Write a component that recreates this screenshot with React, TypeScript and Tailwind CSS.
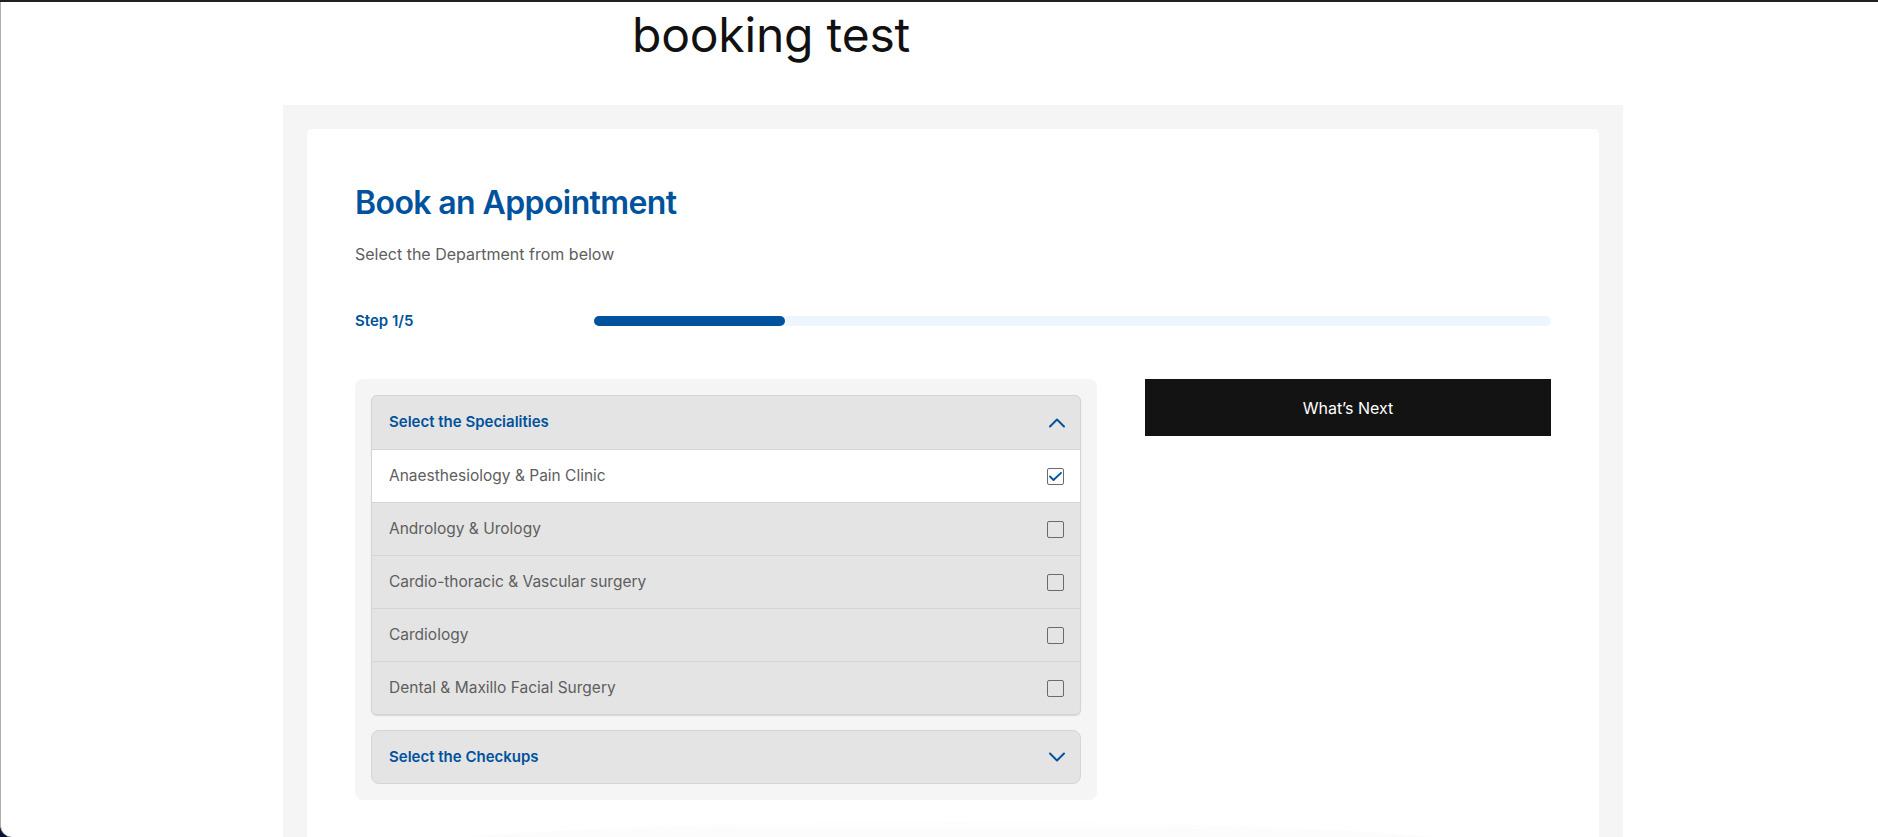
import React from "react";

const BLUE = "#00529c";

function ChevronUp() {
  return (
    <svg width="16" height="10" viewBox="0 0 16 10" fill="none">
      <path d="M1 8.5 L8 1.5 L15 8.5" stroke={BLUE} strokeWidth="2" strokeLinecap="round" strokeLinejoin="round" />
    </svg>
  );
}

function ChevronDown() {
  return (
    <svg width="16" height="10" viewBox="0 0 16 10" fill="none">
      <path d="M1 1.5 L8 8.5 L15 1.5" stroke={BLUE} strokeWidth="2" strokeLinecap="round" strokeLinejoin="round" />
    </svg>
  );
}

function Checkbox({ checked }: { checked: boolean }) {
  return (
    <span className="flex h-[17px] w-[17px] items-center justify-center rounded-[2px] border border-[#6b6b6b] bg-transparent">
      {checked && (
        <svg width="15" height="15" viewBox="0 0 15 15" fill="none">
          <path d="M2 7.5 L5.5 11 L13 3.8" stroke={BLUE} strokeWidth="1.8" strokeLinecap="round" strokeLinejoin="round" />
        </svg>
      )}
    </span>
  );
}

const items = [
  { name: "Anaesthesiology & Pain Clinic", checked: true },
  { name: "Andrology & Urology", checked: false },
  { name: "Cardio-thoracic & Vascular surgery", checked: false },
  { name: "Cardiology", checked: false },
  { name: "Dental & Maxillo Facial Surgery", checked: false },
];

export default function App() {
  return (
    <div
      className="h-[837px] overflow-hidden bg-gradient-to-b from-[#1d2125] to-[#0b1233] pt-[2px]"
      style={{ fontFamily: "Inter, 'Noto Sans', sans-serif" }}
    >
      <div className="relative h-[835px] overflow-hidden rounded-bl-[12px] border-l border-[#b0b0b0] bg-white">
        <div className="h-[103px] pl-[631px] pt-[4px]">
          <h1 className="text-[48px] font-normal leading-[58px] tracking-[-0.2px] text-[#111111]">booking test</h1>
        </div>

        <div className="ml-[282px] w-[1340px] bg-[#f5f5f5] px-[24px] pt-[24px]">
          <div className="rounded-t-[5px] bg-white px-[48px] pb-[40px] pt-[54px]">
            <h2 className="text-[32px] font-semibold leading-[40px] tracking-[-0.6px] text-[#00529c]">Book an Appointment</h2>
            <p className="mt-[19px] text-[16px] leading-6 text-[#5e5e5e]">Select the Department from below</p>

            <div className="mt-[43px] flex items-center">
              <div className="w-[239px] text-[15px] font-semibold leading-6 text-[#00529c]">Step 1/5</div>
              <div className="h-[10px] flex-1 rounded-full bg-[#eef6fd]">
                <div className="h-[10px] rounded-full bg-[#00529c]" style={{ width: "20%" }} />
              </div>
            </div>

            <div className="mt-[46px] grid grid-cols-[742px_1fr] gap-12">
              <div className="rounded-[8px] bg-[#f5f5f5] p-4">
                <div className="overflow-hidden rounded-[6px] border border-[#d5d5d5] bg-[#e4e4e4] shadow-[0_1px_1px_rgba(0,0,0,0.12)]">
                  <div className="flex h-[53px] items-center justify-between pl-[17px] pr-[15px]">
                    <span className="text-[15px] font-semibold text-[#00529c]">Select the Specialities</span>
                    <ChevronUp />
                  </div>
                  {items.map((it) => (
                    <div
                      key={it.name}
                      className={
                        "flex h-[53px] items-center justify-between border-t border-[#d5d5d5] pl-[17px] pr-[16px] " +
                        (it.checked ? "bg-white" : "bg-[#e4e4e4]")
                      }
                    >
                      <span className="text-[15.5px] text-[#5e5e5e]">{it.name}</span>
                      <Checkbox checked={it.checked} />
                    </div>
                  ))}
                </div>

                <div className="mt-[15px] flex h-[54px] items-center justify-between rounded-[8px] border border-[#d5d5d5] bg-[#e4e4e4] pl-[17px] pr-[15px]">
                  <span className="text-[15px] font-semibold text-[#00529c]">Select the Checkups</span>
                  <ChevronDown />
                </div>
              </div>

              <div>
                <button className="flex h-[57px] w-full items-center justify-center bg-[#131313] text-[16px] text-white">
                  What&rsquo;s Next
                </button>
              </div>
            </div>

            <div className="mx-[40px] mt-[22px] h-[60px] rounded-t-[50%] bg-gradient-to-b from-[#fdfdfd] to-[#f8f8f8]" />
          </div>
        </div>
      </div>
    </div>
  );
}
